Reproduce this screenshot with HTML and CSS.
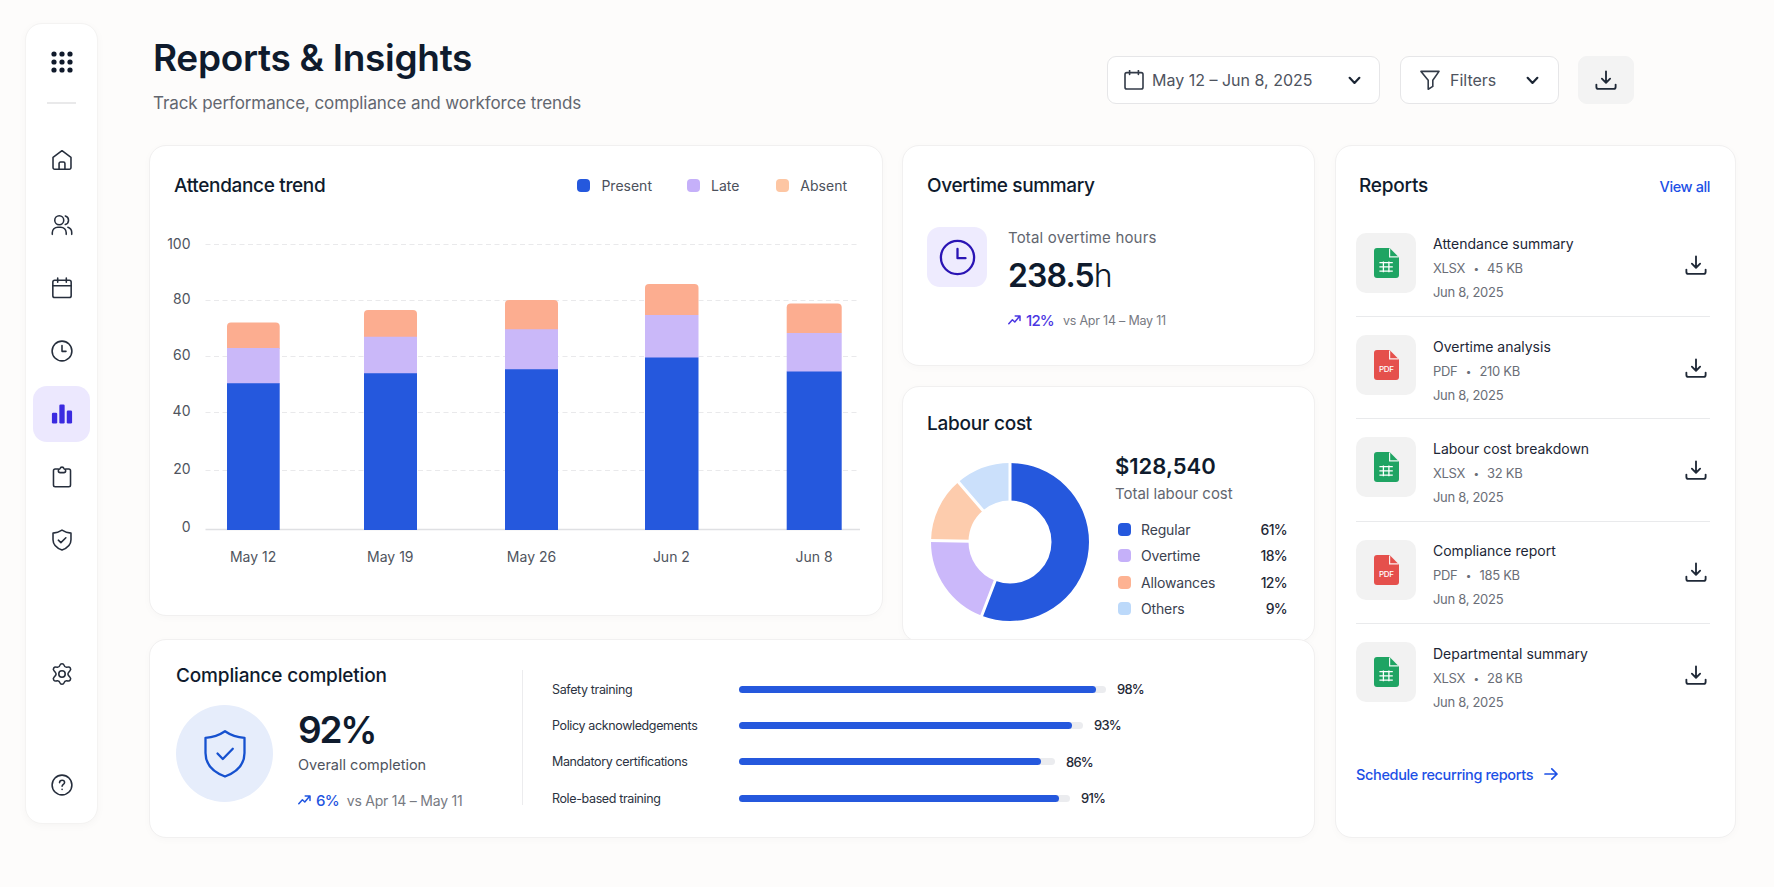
FILE: index.html
```html
<!DOCTYPE html>
<html lang="en">
<head>
<meta charset="utf-8">
<title>Reports &amp; Insights</title>
<link rel="stylesheet" href="styles.css">
</head>
<body>
<svg class="defs" width="0" height="0" aria-hidden="true">
  <symbol id="i-download" viewBox="0 0 24 24"><path d="M12 2.5v12M7.5 10.5l4.5 4.5 4.5-4.5M1.5 17v2.6c0 1.3.9 2.1 2.2 2.1h16.6c1.3 0 2.2-.8 2.2-2.1V17"/></symbol>
  <symbol id="i-chevron" viewBox="0 0 12 8"><path d="M1.5 1.5L6 6.2l4.5-4.7"/></symbol>
  <symbol id="i-trend" viewBox="0 0 13 10"><path d="M.8 8.8l3.6-4 2.4 2.2L11.6 1.2M7.2 1h4.8v4.6"/></symbol>
  <symbol id="i-xlsx" viewBox="0 0 25 30"><path fill="#1fa463" d="M3 0h12.6L25 9.4V27a3 3 0 0 1-3 3H3a3 3 0 0 1-3-3V3a3 3 0 0 1 3-3z"/><path fill="none" stroke="#eefaf3" stroke-width="1.2" d="M15.6.4v8.4h8.8"/><path fill="none" stroke="#fff" stroke-width="1.3" d="M5.4 14.6h13.4M5.4 18.9h13.4M5.4 23.2h13.4M9.4 13.6v10.6M14.9 13.6v10.6"/></symbol>
</svg>

<aside class="sidebar">
  <svg class="apps" viewBox="0 0 24 24"><g fill="#101a2b"><circle cx="4" cy="4" r="2.6"/><circle cx="12" cy="4" r="2.6"/><circle cx="20" cy="4" r="2.6"/><circle cx="4" cy="12" r="2.6"/><circle cx="12" cy="12" r="2.6"/><circle cx="20" cy="12" r="2.6"/><circle cx="4" cy="20" r="2.6"/><circle cx="12" cy="20" r="2.6"/><circle cx="20" cy="20" r="2.6"/></g></svg>
  <div class="rule"></div>
  <nav class="nav">
    <a class="item home"><svg class="ico" viewBox="0 0 24 24"><path d="M2.2 9.2L12 1.9l9.8 7.3v11a1.8 1.8 0 0 1-1.8 1.8H4a1.8 1.8 0 0 1-1.8-1.8zM8.8 22v-6.2a1.6 1.6 0 0 1 1.6-1.6h3.2a1.6 1.6 0 0 1 1.6 1.6V22"/></svg></a>
    <a class="item"><svg class="ico" viewBox="0 0 24 24"><circle cx="9" cy="6.8" r="4.9"/><path d="M1.4 22.2v-1.8a6 6 0 0 1 6-6h3.2a6 6 0 0 1 6 6v1.8M15.6 2.1a4.9 4.9 0 0 1 0 9.4M18.4 14.5a6 6 0 0 1 4.2 5.8v1.9"/></svg></a>
    <a class="item"><svg class="ico" viewBox="0 0 24 24"><rect x="2" y="3.6" width="20" height="18.8" rx="2"/><path d="M2 9.6h20M7.3 1.2v4.4M16.7 1.2v4.4"/></svg></a>
    <a class="item"><svg class="ico" viewBox="0 0 24 24"><circle cx="12" cy="12" r="10.8"/><path d="M12 6v6.4h4.4"/></svg></a>
    <a class="item active"><svg class="ico" viewBox="0 0 24 24"><g fill="#3b2be0" stroke="none"><rect x="1" y="10.6" width="5.8" height="11.8" rx="1.4"/><rect x="9.100" y="1.600" width="5.800" height="20.800" rx="1.400"/><rect x="17.200" y="8.200" width="5.800" height="14.200" rx="1.400"/></g></svg></a>
    <a class="item"><svg class="ico" viewBox="0 0 24 24"><path d="M8 3.200H4.600a1.900 1.900 0 0 0-1.900 1.900v15.600a1.900 1.900 0 0 0 1.900 1.900h14.800a1.900 1.900 0 0 0 1.900-1.900V5.100a1.900 1.900 0 0 0-1.900-1.900H16M8 5.200c0-1.300.7-1.900 1.600-2 .5-1.300 1.300-2 2.400-2s1.900.7 2.400 2c.9.1 1.600.7 1.600 2 0 1.300-.8 2-2 2h-4c-1.200 0-2-.7-2-2z"/></svg></a>
    <a class="item"><svg class="ico" viewBox="0 0 24 24"><path d="M12 1.200c3 2 6.200 3 9.800 3.300v7.300c0 5.200-3.600 8.900-9.800 11.200-6.200-2.300-9.800-6-9.800-11.200V4.500C5.800 4.200 9 3.200 12 1.200zM8 12.200l2.800 2.700 5.400-5.300"/></svg></a>
    <a class="item gear"><svg class="ico" viewBox="0 0 24 24"><circle cx="12" cy="12" r="3.500"/><path d="M9.800 2.300c.3-1 1-1.400 2.200-1.400s1.900.4 2.200 1.400c.5 1.800 1.800 2.600 3.600 2.200 1.700-.5 2.500-.2 3.200.9.800 1.200.7 2-.3 3-1.500 1.500-2.300 2.300-2.300 3.600s.8 2.100 2.300 3.600c1 1 1.100 1.800.3 3-.7 1.100-1.500 1.400-3.200.9-1.800-.4-3.100.4-3.600 2.200-.3 1-1 1.400-2.200 1.400s-1.900-.4-2.200-1.400c-.5-1.800-1.800-2.600-3.600-2.200-1.700.5-2.500.2-3.200-.9-.8-1.200-.7-2 .3-3 1.500-1.500 2.300-2.300 2.300-3.600s-.8-2.100-2.300-3.600c-1-1-1.100-1.800-.3-3 .7-1.100 1.500-1.400 3.200-.9 1.800.4 3.100-.4 3.600-2.200z"/></svg></a>
    <a class="item help"><svg class="ico" viewBox="0 0 24 24"><circle cx="12" cy="12" r="10.800"/><path d="M9.300 9.400c.1-1.600 1.200-2.600 2.800-2.600s2.700 1 2.700 2.400c0 2-2.700 2.300-2.700 4.200M12.100 16.600v.4"/></svg></a>
  </nav>
</aside>

<main class="main">
  <header class="header">
    <div class="heading">
      <h1 class="title">Reports &amp; Insights</h1>
      <p class="subtitle">Track performance, compliance and workforce trends</p>
    </div>
    <div class="controls">
      <button class="control date">
        <svg class="ctl-ico" viewBox="0 0 20 20"><rect x="1" y="2.600" width="18" height="16.400" rx="1.800"/><path d="M5.600.4v4M14.400.4v4"/></svg>
        <span class="date-text">May 12 – Jun 8, 2025</span>
        <svg class="chev"><use href="#i-chevron"/></svg>
      </button>
      <button class="control filters">
        <svg class="ctl-ico" viewBox="0 0 20 20"><path d="M1 1.400h18l-6.200 8.800v6.200l-4.600 2.800v-9z"/></svg>
        <span class="filter-text">Filters</span>
        <svg class="chev"><use href="#i-chevron"/></svg>
      </button>
      <button class="control export"><svg class="dl"><use href="#i-download"/></svg></button>
    </div>
  </header>

  <div class="board">
    <div class="left">
      <div class="top">
        <section class="card attendance">
          <div class="att-head">
            <h2 class="card-title t-att">Attendance trend</h2>
            <ul class="legend">
              <li class="l-present"><i class="sw blue"></i>Present</li>
              <li class="l-late"><i class="sw purple"></i>Late</li>
              <li class="l-absent"><i class="sw peach"></i>Absent</li>
            </ul>
          </div>
          <svg class="chart" width="731" height="360" viewBox="150 220 731 360">
            <g class="grid">
              <path d="M205.500 244.500H860M205.500 300.500H860M205.500 356.500H860M205.500 412.500H860M205.500 470.500H860"/>
            </g>
            <path class="axis" d="M205.500 529.500H860"/>
            <g class="ylab">
              <text x="190.500" y="248.500">100</text><text x="190.500" y="304.200">80</text><text x="190.500" y="360.200">60</text><text x="190.500" y="416.200">40</text><text x="190.500" y="474.200">20</text><text x="190.500" y="531.800">0</text>
            </g>
            <g class="absent">
              <path d="M227 349v-22.500a4 4 0 0 1 4-4h44.700a4 4 0 0 1 4 4V349z"/><path d="M364 337v-23a4 4 0 0 1 4-4h45a4 4 0 0 1 4 4v23z"/><path d="M505 330v-26a4 4 0 0 1 4-4h45a4 4 0 0 1 4 4v26z"/><path d="M645 315v-27a4 4 0 0 1 4-4h45.500a4 4 0 0 1 4 4v27z"/><path d="M786.700 333v-25.500a4 4 0 0 1 4-4h47a4 4 0 0 1 4 4V333z"/>
            </g>
            <g class="late">
              <path d="M227 348h52.700v36H227zM364 336.700h53V374h-53zM505 329.300h53V370h-53zM645 315h53.500v43H645zM786.700 333h55v39h-55z"/>
            </g>
            <g class="present">
              <path d="M227 383.300h52.700V530H227zM364 373.200h53V530h-53zM505 369.200h53V530h-53zM645 357.500h53.500V530H645zM786.700 371.500h55V530h-55z"/>
            </g>
            <g class="xlab">
              <text x="253.100" y="561.700">May 12</text><text x="390.300" y="561.700">May 19</text><text x="531.500" y="561.700">May 26</text><text x="671.400" y="561.700">Jun 2</text><text x="814" y="561.700">Jun 8</text>
            </g>
          </svg>
        </section>

        <div class="middle">
          <section class="card overtime">
            <h2 class="card-title t-over">Overtime summary</h2>
            <div class="over-body">
              <div class="over-ico"><svg width="37" height="37" viewBox="0 0 37 37"><circle cx="18.500" cy="18.500" r="16.600"/><path d="M18.500 9.800v9.400h8"/></svg></div>
              <div class="over-text">
                <p class="over-label">Total overtime hours</p>
                <p class="over-value">238.5<span class="unit">h</span></p>
                <p class="trend violet"><svg class="tr"><use href="#i-trend"/></svg><b class="tr-pct">12%</b><span class="tr-vs small">vs Apr 14 – May 11</span></p>
              </div>
            </div>
          </section>
          <section class="card labour">
            <h2 class="card-title t-lab">Labour cost</h2>
            <div class="lab-body">
              <svg class="donut" width="160" height="160" viewBox="-80 -80 160 160">
                <g fill="none" stroke-width="37.500" transform="rotate(-90)">
                  <circle r="60.250" pathLength="360" stroke="#2558dd" stroke-dasharray="201 159"/>
                  <circle r="60.250" pathLength="360" stroke="#cbb8fa" stroke-dasharray="70 290" stroke-dashoffset="-201"/>
                  <circle r="60.250" pathLength="360" stroke="#fdccad" stroke-dasharray="48.300 311.700" stroke-dashoffset="-271"/>
                  <circle r="60.250" pathLength="360" stroke="#cbe0fb" stroke-dasharray="40.700 319.300" stroke-dashoffset="-319.300"/>
                </g>
                <path stroke="#fff" stroke-width="3" d="M0-40V-81M-14.300 37.300L-29.100 75.800M-40-.7L-81-1.400M-26-30.300L-52.900-61.600"/>
              </svg>
              <div class="lab-text">
                <p class="lab-value">$128,540</p>
                <p class="lab-label">Total labour cost</p>
                <ul class="costs">
                  <li><i class="sw blue"></i><span>Regular</span><b>61%</b></li>
                  <li><i class="sw purple"></i><span>Overtime</span><b>18%</b></li>
                  <li><i class="sw coral"></i><span>Allowances</span><b>12%</b></li>
                  <li><i class="sw sky"></i><span>Others</span><b>9%</b></li>
                </ul>
              </div>
            </div>
          </section>
        </div>
      </div>

      <section class="card compliance">
        <div class="comp-left">
          <h2 class="card-title t-comp">Compliance completion</h2>
          <div class="comp-body">
            <div class="comp-ico"><svg width="44" height="50" viewBox="0 0 44 50"><path d="M22 2.200C27.500 6 34 8.300 41.500 8.800V24c0 11-7.500 19-19.500 23.500C10 43 2.500 35 2.500 24V8.800C10 8.300 16.500 6 22 2.200z"/><path d="M14.500 24.500l5.300 5.500 10-10.200"/></svg></div>
            <div class="comp-text">
              <p class="comp-value">92%</p>
              <p class="comp-label">Overall completion</p>
              <p class="trend azure"><svg class="tr"><use href="#i-trend"/></svg><b class="tr-pct">6%</b><span class="tr-vs">vs Apr 14 – May 11</span></p>
            </div>
          </div>
        </div>
        <ul class="bars">
          <li><span class="bar-name">Safety training</span><span class="track" style="width:367px"><i style="width:357px"></i></span><b>98%</b></li>
          <li><span class="bar-name">Policy acknowledgements</span><span class="track" style="width:344px"><i style="width:333px"></i></span><b>93%</b></li>
          <li><span class="bar-name">Mandatory certifications</span><span class="track" style="width:316px"><i style="width:302px"></i></span><b>86%</b></li>
          <li><span class="bar-name">Role-based training</span><span class="track" style="width:331px"><i style="width:320px"></i></span><b>91%</b></li>
        </ul>
      </section>
    </div>

    <section class="card reports">
      <div class="rep-head"><h2 class="card-title t-rep">Reports</h2><a class="view-all">View all</a></div>
      <ul class="files">
        <li><span class="thumb"><svg><use href="#i-xlsx"/></svg></span><div class="info"><p class="name">Attendance summary</p><p class="meta"><span>XLSX</span><em>•</em><span>45 KB</span></p><p class="meta">Jun 8, 2025</p></div><svg class="dl"><use href="#i-download"/></svg></li>
        <li><span class="thumb"><svg viewBox="0 0 25 30"><path fill="#e5504c" d="M3 0h12.600L25 9.400V27a3 3 0 0 1-3 3H3a3 3 0 0 1-3-3V3a3 3 0 0 1 3-3z"/><path fill="none" stroke="#fdeeee" stroke-width="1.200" d="M15.600.4v8.400h8.800"/><text class="pdf" x="12.400" y="22.400">PDF</text></svg></span><div class="info"><p class="name">Overtime analysis</p><p class="meta"><span>PDF</span><em>•</em><span>210 KB</span></p><p class="meta">Jun 8, 2025</p></div><svg class="dl"><use href="#i-download"/></svg></li>
        <li><span class="thumb"><svg><use href="#i-xlsx"/></svg></span><div class="info"><p class="name">Labour cost breakdown</p><p class="meta"><span>XLSX</span><em>•</em><span>32 KB</span></p><p class="meta">Jun 8, 2025</p></div><svg class="dl"><use href="#i-download"/></svg></li>
        <li><span class="thumb"><svg viewBox="0 0 25 30"><path fill="#e5504c" d="M3 0h12.600L25 9.400V27a3 3 0 0 1-3 3H3a3 3 0 0 1-3-3V3a3 3 0 0 1 3-3z"/><path fill="none" stroke="#fdeeee" stroke-width="1.200" d="M15.600.4v8.400h8.800"/><text class="pdf" x="12.400" y="22.400">PDF</text></svg></span><div class="info"><p class="name">Compliance report</p><p class="meta"><span>PDF</span><em>•</em><span>185 KB</span></p><p class="meta">Jun 8, 2025</p></div><svg class="dl"><use href="#i-download"/></svg></li>
        <li><span class="thumb"><svg><use href="#i-xlsx"/></svg></span><div class="info"><p class="name">Departmental summary</p><p class="meta"><span>XLSX</span><em>•</em><span>28 KB</span></p><p class="meta">Jun 8, 2025</p></div><svg class="dl"><use href="#i-download"/></svg></li>
      </ul>
      <a class="schedule"><span>Schedule recurring reports</span><svg width="14" height="14" viewBox="0 0 14 14"><path d="M1 7h12M7.800 1.800L13 7l-5.200 5.200"/></svg></a>
    </section>
  </div>
</main>
</body>
</html>
```
FILE: styles.css
```css
* { box-sizing: border-box; margin: 0; padding: 0; }
body {
  display: flex;
  align-items: flex-start;
  width: 1774px;
  height: 887px;
  overflow: hidden;
  padding: 23px 0 0 25px;
  background: #fdfcfb;
  color: #3b4250;
  font-family: Inter, "Liberation Sans", sans-serif;
  font-size: 14px;
}
ul { list-style: none; }
b { font-weight: 500; }
i, em { font-style: normal; }
button { font: inherit; color: inherit; }
.defs { position: absolute; }

/* Sidebar */
.sidebar {
  flex: none;
  display: flex;
  flex-direction: column;
  align-items: center;
  width: 73px;
  height: 801px;
  padding-top: 26px;
  background: #fff;
  border: 1px solid #f4f3f2;
  border-radius: 17px;
  box-shadow: 0 2px 8px rgba(40, 30, 20, .03);
}
.apps { width: 24px; height: 24px; }
.rule { width: 29px; height: 2px; margin: 28px 0; background: #e9e9ea; }
.nav { display: flex; flex-direction: column; gap: 7px; }
.item {
  display: flex;
  align-items: center;
  justify-content: center;
  width: 57px;
  height: 56px;
  border-radius: 14px;
}
.home { margin-bottom: 2px; }
.gear { margin-top: 71px; }
.help { margin-top: 48px; }
.active { background: #ece8fe; }
.ico {
  width: 22px; height: 22px;
  fill: none; stroke: #262e3c; stroke-width: 1.7;
  stroke-linecap: round; stroke-linejoin: round;
}

/* Header */
.main { flex: none; width: 1587px; margin-left: 51px; }
.header { display: flex; height: 122px; padding: 13px 102px 0 4px; }
.heading { display: flex; flex-direction: column; gap: 12px; }
.title { font-size: 37px; line-height: 44px; font-weight: 570; color: #0f1b2d; letter-spacing: -.3px; white-space: nowrap; }
.subtitle { font-size: 17px; line-height: 22px; color: #62666f; letter-spacing: -.09px; white-space: nowrap; }
.controls { display: flex; gap: 20px; margin: 20px 0 0 auto; height: 48px; }
.control {
  display: flex;
  align-items: center;
  height: 48px;
  border: 1px solid #e6e6e8;
  border-radius: 9px;
  background: #fff;
  color: #4e535e;
  font-size: 16px;
  line-height: 20px;
  white-space: nowrap;
}
.date { width: 273px; padding: 0 18px 0 16px; }
.date-text { margin-left: 8px; }
.filters { width: 159px; padding: 0 19px 0 19px; }
.filter-text { margin-left: 10px; }
.export { width: 56px; margin-left: -1px; justify-content: center; background: #f3f3f3; border-color: #f3f3f3; }
.ctl-ico { width: 20px; height: 20px; fill: none; stroke: #333b48; stroke-width: 1.6; stroke-linejoin: round; stroke-linecap: round; }
.chev { width: 13px; height: 9px; margin-left: auto; fill: none; stroke: #1b2534; stroke-width: 2; stroke-linecap: round; stroke-linejoin: round; }
.dl { width: 22px; height: 22px; fill: none; stroke: #1f2937; stroke-width: 2; stroke-linecap: round; stroke-linejoin: round; }

/* Board and cards */
.board { display: flex; gap: 20px; }
.left { width: 1166px; }
.top { display: flex; align-items: flex-start; gap: 19px; height: 494px; }
.card {
  background: #fff;
  border: 1px solid #f1f0f0;
  border-radius: 17px;
  box-shadow: 0 2px 8px rgba(40, 30, 20, .025);
}
.card-title { font-size: 19px; line-height: 24px; font-weight: 500; color: #0f1b2d; white-space: nowrap; }
.t-att, .t-over { letter-spacing: -.34px; }
.t-lab, .t-rep { letter-spacing: -.24px; }
.t-comp { letter-spacing: -.16px; }
.sw { display: block; flex: none; width: 13px; height: 13px; border-radius: 4px; }
.blue { background: #2558dd; }
.purple { background: #c5b0f9; }
.peach { background: #fdc6a3; }
.coral { background: #fdb292; }
.sky { background: #bcd9fa; }

/* Attendance */
.attendance { width: 734px; height: 471px; }
.att-head { display: flex; justify-content: space-between; padding: 28px 35px 0 24px; height: 74px; }
.legend { display: flex; gap: 36px; height: 22px; align-items: center; color: #4c515c; }
.legend li { display: flex; align-items: center; gap: 11px; }
.l-late { margin: 0 1px 0 -1px; }
.chart { display: block; }
.grid { stroke: #e9e9eb; stroke-dasharray: 5 3.5; fill: none; }
.axis { stroke: #dfe0e3; stroke-width: 1.5; }
.ylab, .xlab { fill: #4f545e; font-size: 14px; }
.ylab { text-anchor: end; }
.xlab { text-anchor: middle; }
.absent { fill: #fcad90; }
.late { fill: #cab8f9; }
.present { fill: #2558dd; }

/* Overtime */
.middle { display: flex; flex-direction: column; gap: 20px; width: 413px; }
.overtime { height: 221px; padding: 28px 25px 0 24px; }
.over-body { display: flex; gap: 21px; margin-top: 29px; }
.over-ico { display: flex; align-items: center; justify-content: center; width: 60px; height: 60px; border-radius: 13px; background: #eeebfe; }
.over-ico svg { fill: none; stroke: #2a14b4; stroke-width: 2.3; stroke-linecap: round; stroke-linejoin: round; }
.over-text { padding-top: 1px; }
.over-label { font-size: 15px; line-height: 20px; color: #62666f; letter-spacing: .17px; }
.over-value { margin-top: 8px; font-size: 32px; line-height: 40px; font-weight: 600; color: #0f1b2d; letter-spacing: -.9px; }
.unit { font-weight: 300; }
.trend { display: flex; align-items: center; height: 20px; margin-top: 14px; white-space: nowrap; }
.tr { width: 13px; height: 10px; fill: none; stroke: currentColor; stroke-width: 1.5; stroke-linecap: round; stroke-linejoin: round; }
.tr-pct { margin-left: 5px; font-size: 15px; letter-spacing: -.8px; }
.tr-vs { margin-left: 9px; font-size: 14px; letter-spacing: -.22px; color: #777a82; }
.tr-vs.small { font-size: 12.5px; }
.violet { color: #4a36e2; }
.azure { color: #1f55e0; }

/* Labour */
.labour { height: 256px; padding: 25px 27px 0 24px; }
.lab-body { display: flex; margin-top: 26px; }
.donut { flex: none; margin: 0 0 0 3px; }
.lab-text { flex: 1; margin-left: 25px; }
.lab-value { font-size: 22px; line-height: 28px; font-weight: 600; color: #0f1b2d; margin-top: -10px; }
.lab-label { font-size: 15px; line-height: 20px; color: #62666f; margin-top: 4px; letter-spacing: -.03px; }
.costs { margin-top: 12px; }
.costs li { display: flex; align-items: center; height: 26.5px; padding-left: 3px; }
.costs span { margin-left: 10px; letter-spacing: -.15px; }
.costs b { margin-left: auto; color: #1f2937; letter-spacing: -.7px; }

/* Compliance */
.compliance { position: relative; z-index: 1; display: flex; height: 199px; }
.comp-left { width: 373px; height: 135px; margin-top: 30px; padding-left: 26px; border-right: 1px solid #ececee; }
.t-comp { margin-top: -6px; }
.comp-body { display: flex; margin-top: 17px; }
.comp-ico { display: flex; align-items: center; justify-content: center; width: 97px; height: 97px; border-radius: 50%; background: #e6edfb; }
.comp-ico svg { fill: none; stroke: #1651cf; stroke-width: 2.3; stroke-linecap: round; stroke-linejoin: round; }
.comp-text { margin-left: 25px; }
.comp-value { margin-top: 3px; font-size: 37px; line-height: 44px; font-weight: 570; color: #0f1b2d; letter-spacing: -2.2px; }
.comp-label { margin-top: 3px; font-size: 14.5px; line-height: 20px; color: #4f545e; }
.comp-text .trend { margin-top: 15px; }
.comp-text .tr-vs { margin-left: 8px; }
.bars { margin: 31px 0 0 29px; }
.bars li { display: flex; align-items: center; height: 36.3px; }
.bar-name { width: 187px; font-size: 12.5px; letter-spacing: -.37px; color: #2b3341; white-space: nowrap; }
.track { display: block; height: 7px; border-radius: 4px; background: #ebecef; }
.track i { display: block; height: 7px; border-radius: 4px; background: #2558dd; }
.bars b { margin-left: 11px; font-size: 13px; letter-spacing: -.8px; color: #1f2937; }

/* Reports */
.reports { width: 401px; height: 693px; padding: 27px 25px 0 20px; }
.rep-head { display: flex; justify-content: space-between; align-items: center; height: 26px; padding-left: 3px; }
.view-all { padding-top: 1px; font-size: 14.5px; font-weight: 500; letter-spacing: -.4px; color: #1c50e6; }
.files { margin-top: 7px; }
.files li { display: flex; align-items: center; height: 102.3px; padding-right: 3px; border-bottom: 1.5px solid #e9eaec; }
.files li:first-child { height: 111px; padding-top: 8px; }
.files li:last-child { border-bottom-color: transparent; }
.thumb { display: flex; align-items: center; justify-content: center; flex: none; width: 60px; height: 60px; margin-bottom: 5px; border-radius: 10px; background: #f2f2f2; }
.thumb svg { width: 25px; height: 30px; }
.pdf { text-anchor: middle; fill: #fff; font-size: 8px; font-weight: 500; letter-spacing: -.3px; }
.info { flex: 1; margin: 6px 0 0 17px; }
.name { font-size: 14px; line-height: 24px; color: #1c2636; }
.meta { display: flex; font-size: 13px; line-height: 24px; letter-spacing: -.3px; color: #6a6e77; }
.meta em { width: 22px; text-align: center; font-size: 10px; }
.schedule { display: flex; align-items: center; gap: 11px; margin-top: 36px; height: 24px; font-size: 14.5px; font-weight: 500; letter-spacing: -.36px; color: #1c50e6; }
.schedule svg { fill: none; stroke: #1c50e6; stroke-width: 1.7; stroke-linecap: round; stroke-linejoin: round; }
```
